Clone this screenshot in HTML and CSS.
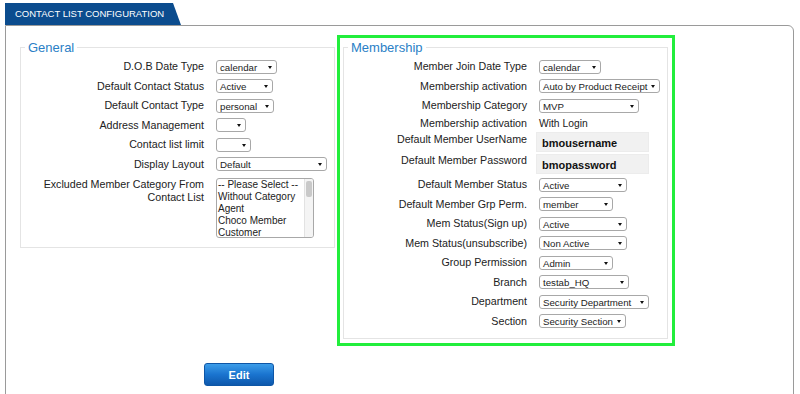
FILE: index.html
```html
<!DOCTYPE html>
<html lang="en">
<head>
    <meta charset="utf-8">
    <title>Contact List Configuration</title>
    <link rel="stylesheet" href="styles.css">
</head>
<body>
<div class="page">
    <div class="tab">CONTACT LIST CONFIGURATION</div>
    <div class="panel">
        <div class="columns">
            <fieldset class="group general">
                <legend>General</legend>
                <div class="row"><label>D.O.B Date Type</label><span class="sel w61">calendar</span></div>
                <div class="row"><label>Default Contact Status</label><span class="sel w57">Active</span></div>
                <div class="row"><label>Default Contact Type</label><span class="sel w58">personal</span></div>
                <div class="row"><label>Address Management</label><span class="sel w30"></span></div>
                <div class="row"><label>Contact list limit</label><span class="sel w35"></span></div>
                <div class="row"><label>Display Layout</label><span class="sel w111">Default</span></div>
                <div class="row row-top">
                    <label>Excluded Member Category From Contact List</label>
                    <div class="listbox">
                        <ul>
                            <li>-- Please Select --</li>
                            <li>Without Category</li>
                            <li>Agent</li>
                            <li>Choco Member</li>
                            <li>Customer</li>
                        </ul>
                        <i class="scroll"><b></b></i>
                    </div>
                </div>
            </fieldset>

            <div class="highlight">
                <fieldset class="group membership">
                    <legend>Membership</legend>
                    <div class="row"><label>Member Join Date Type</label><span class="sel w62">calendar</span></div>
                    <div class="row"><label>Membership activation</label><span class="sel w121">Auto by Product Receipt</span></div>
                    <div class="row"><label>Membership Category</label><span class="sel w100">MVP</span></div>
                    <div class="row row-short"><label>Membership activation</label><span class="plain">With Login</span></div>
                    <div class="row row-input"><label>Default Member UserName</label><span class="field">bmousername</span></div>
                    <div class="row row-input"><label>Default Member Password</label><span class="field">bmopassword</span></div>
                    <div class="row"><label>Default Member Status</label><span class="sel w88">Active</span></div>
                    <div class="row"><label>Default Member Grp Perm.</label><span class="sel w74">member</span></div>
                    <div class="row"><label>Mem Status(Sign up)</label><span class="sel w88">Active</span></div>
                    <div class="row"><label>Mem Status(unsubscribe)</label><span class="sel w88">Non Active</span></div>
                    <div class="row"><label>Group Permission</label><span class="sel w74">Admin</span></div>
                    <div class="row"><label>Branch</label><span class="sel w90">testab_HQ</span></div>
                    <div class="row"><label>Department</label><span class="sel w110">Security Department</span></div>
                    <div class="row"><label>Section</label><span class="sel w87">Security Section</span></div>
                </fieldset>
            </div>
        </div>

        <div class="actions">
            <button class="btn" type="button">Edit</button>
        </div>
    </div>
</div>
</body>
</html>
```

FILE: styles.css
```css
html, body {
    padding: 0;
    margin: 0;
    background-color: #FFFFFF;
    font-family: "Liberation Sans", Arial, Helvetica, sans-serif;
    color: #222222;
}

.page {
    margin: 3px 6px 0 5px;
}

.tab {
    width: 176px;
    height: 22px;
    line-height: 22px;
    padding-left: 10px;
    box-sizing: border-box;
    background-color: #0b4c8e;
    color: #FFFFFF;
    font-size: 9.5px;
    clip-path: polygon(0 0, 168px 0, 176px 22px, 0 22px);
}

.panel {
    min-height: 372px;
    border: 1px solid #9a9a9a;
    border-top-right-radius: 6px;
    padding-left: 14px;
}

.columns {
    display: flex;
    align-items: flex-start;
}

/* fieldsets */
.group {
    margin: 0;
    padding: 2px 0 9px 0;
    border: 1px solid #e4e4e4;
    min-width: 0;
}

.group legend {
    margin-left: 4px;
    padding: 0 3px;
    font-size: 13px;
    line-height: 15px;
    color: #2a80c6;
}

.general {
    width: 315px;
    box-sizing: border-box;
    margin-top: 14px;
    margin-right: 2px;
}

.highlight {
    margin-top: 9px;
    border: 3px solid #22ee3c;
    padding: 2px 4px 4px 3px;
    width: 338px;
    box-sizing: border-box;
}

.membership {
    padding-bottom: 7px;
}

/* rows */
.row {
    display: flex;
    align-items: center;
    height: 19.5px;
}

.row label {
    flex: none;
    width: 183px;
    margin-right: 12px;
    text-align: right;
    font-size: 10.7px;
    line-height: 13px;
}

.row-short {
    height: 16px;
}

.row-input {
    height: 21.75px;
    align-items: flex-start;
}

.row-input label {
    padding-top: 1px;
}

.row-top {
    height: auto;
    align-items: flex-start;
    padding-top: 4px;
}

.plain {
    font-size: 10.3px;
}

.sel {
    position: relative;
    display: inline-block;
    box-sizing: border-box;
    height: 14px;
    line-height: 13px;
    padding-left: 3px;
    border: 1px solid #a8a8a8;
    border-radius: 3px;
    background-color: #FFFFFF;
    font-size: 9.7px;
    white-space: nowrap;
    overflow: hidden;
}

.sel::after {
    content: "";
    position: absolute;
    right: 4px;
    top: 5px;
    border-left: 2px solid transparent;
    border-right: 2px solid transparent;
    border-top: 3px solid #111111;
}

.w30 { width: 30px; }
.w35 { width: 35px; }
.w57 { width: 57px; }
.w58 { width: 58px; }
.w61 { width: 61px; }
.w62 { width: 62px; }
.w74 { width: 74px; }
.w87 { width: 87px; }
.w88 { width: 88px; }
.w90 { width: 90px; }
.w100 { width: 100px; }
.w110 { width: 110px; }
.w111 { width: 111px; }
.w121 { width: 121px; }

.field {
    display: block;
    box-sizing: border-box;
    width: 113px;
    height: 20px;
    margin-left: -3px;
    margin-top: 0.5px;
    padding-left: 5px;
    line-height: 20px;
    background-color: #f1f1f1;
    border: 1px solid #ececec;
    font-size: 11px;
    font-weight: bold;
    color: #111111;
}

.listbox {
    position: relative;
    width: 98px;
    height: 60px;
    box-sizing: border-box;
    border: 1px solid #a8a8a8;
    border-radius: 3px;
    overflow: hidden;
}

.listbox ul {
    margin: 0;
    padding: 0 0 0 1px;
    list-style: none;
}

.listbox li {
    font-size: 10px;
    line-height: 12px;
    white-space: nowrap;
}

.listbox .scroll {
    position: absolute;
    top: 0;
    right: 0;
    bottom: 0;
    width: 8px;
    background-color: #f4f4f4;
    border-left: 1px solid #e2e2e2;
}

.listbox .scroll b {
    display: block;
    margin: 2px 1px 0 1px;
    height: 16px;
    border-radius: 2px;
    background-color: #c9c9c9;
}

/* button */
.actions {
    margin-top: 17px;
    padding-left: 184px;
}

.btn {
    width: 70px;
    height: 23px;
    padding: 0;
    border: 1px solid #0e56a6;
    border-radius: 3px;
    background: linear-gradient(to bottom, #3c9de9 0%, #1a74cf 50%, #0e58ac 100%);
    color: #FFFFFF;
    font-family: "Liberation Sans", Arial, Helvetica, sans-serif;
    font-size: 11px;
    font-weight: bold;
    cursor: pointer;
}
```
